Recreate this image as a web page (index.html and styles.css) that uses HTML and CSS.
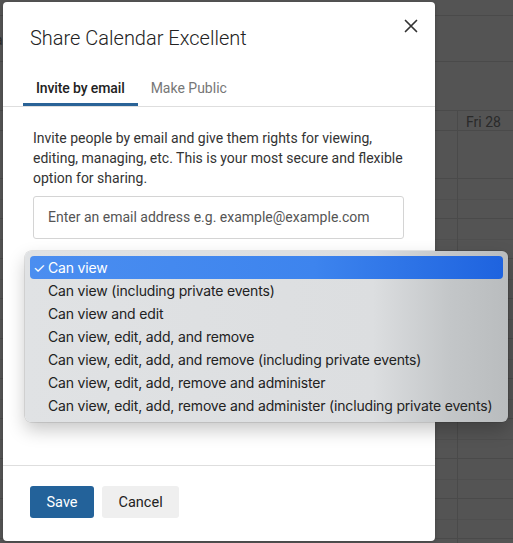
FILE: index.html
```html
<!DOCTYPE html>
<html>
<head>
<meta charset="utf-8">
<link rel="stylesheet" href="styles.css">
</head>
<body>
<div class="cal">
  <div class="cal-band band-a"></div>
  <div class="cal-band band-b"><span class="peek">a</span></div>
  <div class="cal-band band-c"></div>
  <div class="cal-grid">
    <div class="cell head left"></div>
    <div class="cell head right">Fri 28</div>
    <div class="cell allday left"></div>
    <div class="cell allday right"></div>
    <div class="cell slots left"></div>
    <div class="cell slots right"></div>
  </div>
</div>

<div class="dialog">
  <div class="dialog-head">
    <h1 class="title">Share Calendar Excellent</h1>
    <button class="close" aria-label="Close">
      <svg width="14" height="14" viewBox="0 0 14 14"><path d="M1.5 1.5 L12.5 12.5 M12.5 1.5 L1.5 12.5" stroke="#333" stroke-width="1.7" stroke-linecap="round"/></svg>
    </button>
  </div>
  <div class="tabs">
    <div class="tab active">Invite by email</div>
    <div class="tab">Make Public</div>
  </div>
  <div class="dialog-body">
    <p class="intro">Invite people by email and give them rights for viewing, editing, managing, etc. This is your most secure and flexible option for sharing.</p>
    <div class="email">Enter an email address e.g. example@example.com</div>
  </div>
  <div class="dialog-foot">
    <button class="btn primary">Save</button>
    <button class="btn">Cancel</button>
  </div>
</div>

<div class="menu">
  <div class="item selected"><span class="check">✓</span>Can view</div>
  <div class="item"><span class="check"></span>Can view (including private events)</div>
  <div class="item"><span class="check"></span>Can view and edit</div>
  <div class="item"><span class="check"></span>Can view, edit, add, and remove</div>
  <div class="item"><span class="check"></span>Can view, edit, add, and remove (including private events)</div>
  <div class="item"><span class="check"></span>Can view, edit, add, remove and administer</div>
  <div class="item"><span class="check"></span>Can view, edit, add, remove and administer (including private events)</div>
</div>
</body>
</html>
```
FILE: styles.css
```css
html, body {
  margin: 0;
  padding: 0;
  height: 100%;
  overflow: hidden;
}
body {
  background: #545454;
  font-family: Roboto, "Liberation Sans", sans-serif;
  position: relative;
}

/* background calendar (dimmed) */
.cal {
  display: flex;
  flex-direction: column;
  height: 100%;
}
.cal-band {
  border-bottom: 1px solid #4a4a4a;
  flex: none;
}
.band-a { height: 15px; }
.band-b { height: 45px; }
.band-c { height: 48px; }
.peek {
  display: block;
  width: 8px;
  margin-left: -5px;
  padding-top: 16px;
  font-size: 14px;
  color: #2c2c2c;
}
.cal-grid {
  flex: 1;
  display: grid;
  grid-template-columns: 458px 1fr;
  grid-template-rows: 20px 48px 1fr;
}
.cell {
  border-bottom: 1px solid #4a4a4a;
}
.cell.left {
  border-right: 1px solid #4a4a4a;
}
.head.right {
  font-size: 14px;
  color: #2a2a2a;
  padding-left: 8px;
  line-height: 20px;
  padding-top: 1px;
}
.slots {
  border-bottom: none;
  background: repeating-linear-gradient(to bottom,
    transparent 0, transparent 20px,
    #4f4f4f 20px, #4f4f4f 21px,
    transparent 21px, transparent 39px,
    #4a4a4a 39px, #4a4a4a 40px);
}

/* dialog */
.dialog {
  position: absolute;
  left: 3px;
  top: 2px;
  width: 432px;
  height: 539px;
  background: #fff;
  border-radius: 4px;
  display: flex;
  flex-direction: column;
  box-shadow: 0 1px 4px rgba(0,0,0,.2);
}
.dialog-head {
  position: relative;
  padding: 24px 27px 0;
}
.title {
  margin: 0;
  font-size: 20px;
  line-height: 24px;
  font-weight: 300;
  color: #222;
}
.close {
  position: absolute;
  top: 15px;
  right: 15px;
  width: 18px;
  height: 18px;
  padding: 2px;
  border: 0;
  background: none;
  display: flex;
}
.tabs {
  display: flex;
  margin-top: 20px;
  padding-left: 20px;
  border-bottom: 1px solid #dedede;
}
.tab {
  padding: 8px 13px 5px;
  font-size: 14px;
  line-height: 20px;
  color: #777;
  border-bottom: 3px solid transparent;
}
.tab.active {
  color: #222;
  font-weight: 500;
  letter-spacing: -0.12px;
  border-bottom-color: #2a6397;
}
.dialog-body {
  flex: 1;
  padding: 21px 31px 0 30px;
}
.intro {
  margin: 0;
  font-size: 14px;
  line-height: 20px;
  color: #333;
}
.email {
  margin-top: 8px;
  height: 41px;
  border: 1px solid #d4d4d4;
  border-radius: 3px;
  padding: 0 14px;
  font-size: 14px;
  line-height: 41px;
  color: #555;
}
.dialog-foot {
  border-top: 1px solid #dedede;
  padding: 20px 27px 23px;
  display: flex;
  gap: 8px;
}
.btn {
  height: 32px;
  padding: 0 16.5px;
  border: 0;
  border-radius: 3px;
  background: #efefef;
  color: #222;
  font-family: Roboto, "Liberation Sans", sans-serif;
  font-size: 14.5px;
}
.btn.primary {
  background: #23629a;
  color: #fff;
}

/* native select popup */
.menu {
  position: absolute;
  left: 25px;
  top: 251px;
  width: 473px;
  padding: 5px;
  border-radius: 6px;
  background: linear-gradient(to right, #e0e2e4 0%, #dcdee0 72%, #c3c6c8 88%, #b9bcbe 100%);
  box-shadow: 0 0 0 0.5px rgba(0,0,0,.18), 0 8px 18px rgba(0,0,0,.22);
  font-family: Inter, "Noto Sans", sans-serif;
}
.item {
  height: 23px;
  line-height: 23px;
  font-size: 14px;
  letter-spacing: -0.17px;
  color: #222;
  border-radius: 4px;
  display: flex;
  white-space: nowrap;
}
.check {
  width: 18px;
  flex: none;
  padding-left: 3px;
  box-sizing: border-box;
  letter-spacing: 0;
}
.item.selected {
  background: linear-gradient(to right, #4b8ef0 0%, #3d84ee 60%, #1e63df 100%);
  color: #fff;
}
```
